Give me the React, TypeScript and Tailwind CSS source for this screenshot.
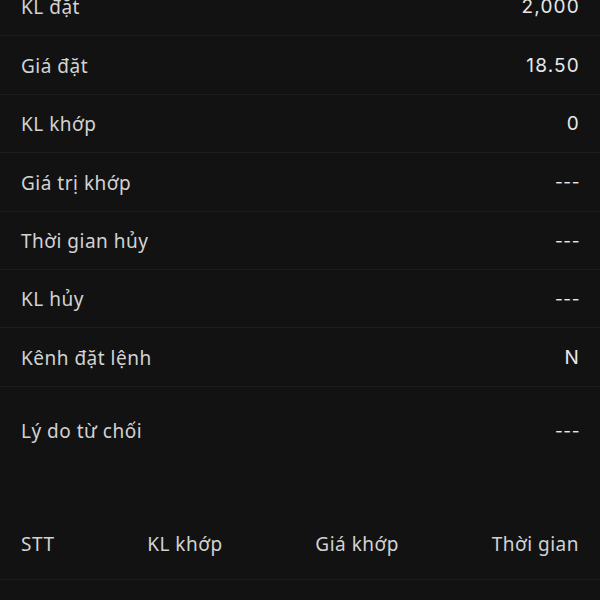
import React from 'react';

const rows: [string, string][] = [
  ['KL đặt', '2,000'],
  ['Giá đặt', '18.50'],
  ['KL khớp', '0'],
  ['Giá trị khớp', '---'],
  ['Thời gian hủy', '---'],
  ['KL hủy', '---'],
  ['Kênh đặt lệnh', 'N'],
];

const label = "font-['Noto_Sans',sans-serif] text-[19px] tracking-[0.5px] text-[#d2d2d2]";
const value = "font-['Inter',sans-serif] text-[19px] tracking-[1.2px] text-[#e8e8e8]";
const dash = "font-['Inter',sans-serif] text-[17px] tracking-[0.5px] text-[#e8e8e8]";

const App = () => {
  return (
    <div className="h-[600px] w-[600px] overflow-hidden bg-[#121212]">
      <div className="-mt-[22px]">
        {/* Order detail rows */}
        {rows.map(([k, v]) => (
          <div
            key={k}
            className="flex h-[58.4px] items-center justify-between border-b border-[#1d1d1d] pl-[21px] pr-[20px] pt-[2px]"
          >
            <span className={label}>{k}</span>
            <span className={v === '---' ? dash : value}>{v}</span>
          </div>
        ))}

        <div className="flex h-[88px] items-center justify-between pl-[21px] pr-[20px] pt-[2px]">
          <span className={label}>Lý do từ chối</span>
          <span className={dash}>---</span>
        </div>

        {/* Match table header */}
        <div className="mt-[35px] flex h-[70px] items-center justify-between border-b border-[#1d1d1d] px-[21px]">
          <span className={label}>STT</span>
          <span className={label}>KL khớp</span>
          <span className={label}>Giá khớp</span>
          <span className={label}>Thời gian</span>
        </div>
      </div>
    </div>
  );
};

export default App;
